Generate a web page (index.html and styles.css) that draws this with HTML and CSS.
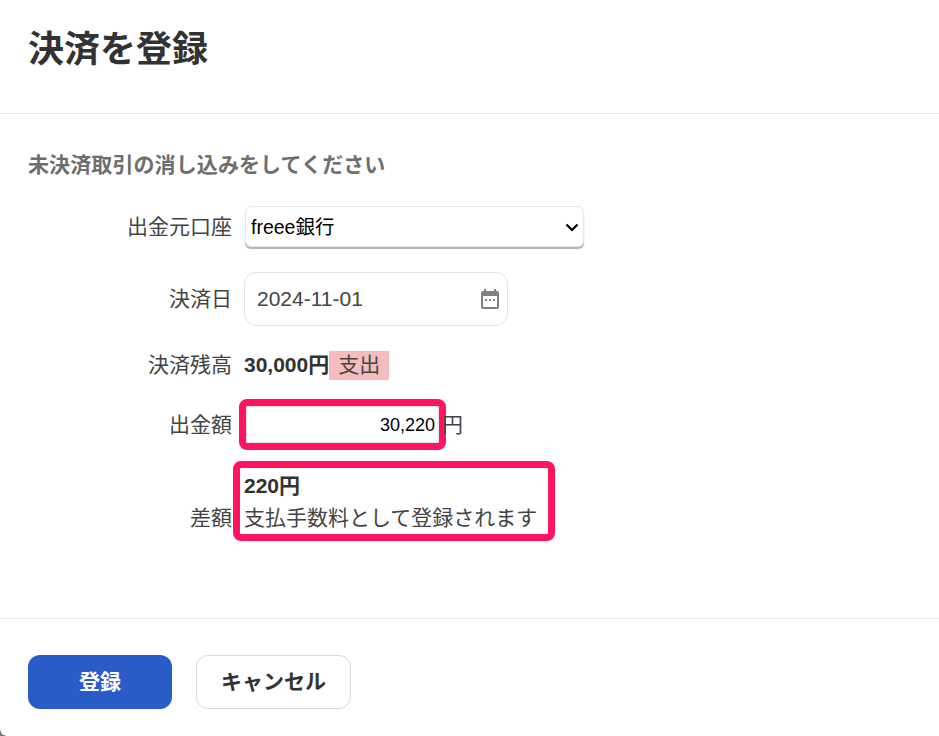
FILE: index.html
```html
<!DOCTYPE html>
<html lang="ja">
<head>
    <meta charset="UTF-8">
    <title>決済を登録</title>
    <link rel="stylesheet" href="styles.css">
</head>
<body>
    <div class="dialog">
        <header class="dialog-header">
            <h1 class="dialog-title">決済を登録</h1>
        </header>
        <div class="dialog-body">
            <h2 class="lead">未決済取引の消し込みをしてください</h2>
            <div class="row row-select">
                <label class="row-label">出金元口座</label>
                <div class="select-wrap">
                    <select class="account-select">
                        <option>freee銀行</option>
                    </select>
                    <svg class="select-arrow" width="14" height="9" viewBox="0 0 14 9">
                        <path fill="none" stroke="#000" stroke-width="2.2" d="M1.5 1.5L7 7l5.5-5.5"/>
                    </svg>
                </div>
            </div>
            <div class="row row-date">
                <label class="row-label">決済日</label>
                <div class="date-input">
                    <span>2024-11-01</span>
                    <svg class="date-icon" width="18" height="20" viewBox="0 0 18 20">
                        <path fill="#808080" d="M3 0h2v2h8V0h2v2h1a2 2 0 0 1 2 2v14a2 2 0 0 1-2 2H2a2 2 0 0 1-2-2V4a2 2 0 0 1 2-2h1z"/>
                        <rect x="2" y="7" width="14" height="11" fill="#fff"/>
                        <rect x="4" y="10" width="2" height="2" fill="#808080"/>
                        <rect x="8" y="10" width="2" height="2" fill="#808080"/>
                        <rect x="12" y="10" width="2" height="2" fill="#808080"/>
                    </svg>
                </div>
            </div>
            <div class="row row-balance">
                <label class="row-label">決済残高</label>
                <strong class="amount">30,000円</strong>
                <span class="tag">支出</span>
            </div>
            <div class="row row-payment">
                <label class="row-label">出金額</label>
                <div class="highlight amount-input">30,220</div>
                <span class="unit">円</span>
            </div>
            <div class="row row-diff">
                <label class="row-label">差額</label>
                <div class="highlight diff-box">
                    <strong class="amount">220円</strong>
                    <div>支払手数料として登録されます</div>
                </div>
            </div>
        </div>
        <footer class="dialog-footer">
            <button class="btn btn-primary">登録</button>
            <button class="btn btn-cancel">キャンセル</button>
        </footer>
    </div>
    <div class="corner"></div>
</body>
</html>
```

FILE: styles.css
```css
html, body {
    margin: 0;
    padding: 0;
    height: 736px;
    overflow: hidden;
    background-color: #fff;
    color: #323232;
    font-family: "Liberation Sans", "Noto Sans CJK JP", sans-serif;
}
.dialog-header {
    height: 113px;
    padding: 0 28px;
    border-bottom: 1px solid #e6e6e6;
}
.dialog-title {
    margin: 0;
    padding-top: 24px;
    font-size: 36px;
    line-height: 52px;
    font-weight: 700;
}
.dialog-body {
    height: 505px;
    padding: 0 28px;
    box-sizing: border-box;
    border-bottom: 1px solid #e6e6e6;
}
.lead {
    margin: 0;
    padding-top: 36px;
    font-size: 21px;
    line-height: 30px;
    font-weight: 700;
    letter-spacing: 0.1px;
    color: #6e6e6e;
}
.row {
    display: flex;
    align-items: center;
    font-size: 21px;
    color: #444;
}
.row-label {
    width: 204px;
    margin-right: 12px;
    line-height: 26px;
    text-align: right;
    flex-shrink: 0;
}
.row-select {
    margin-top: 26px;
}
.select-wrap {
    position: relative;
    margin-left: 1px;
}
.account-select {
    display: block;
    width: 339px;
    height: 41px;
    padding: 0 5px;
    appearance: none;
    background-color: #fff;
    border: 1px solid #e8e8e8;
    border-radius: 6px;
    box-shadow: 0 2px 1px rgba(0, 0, 0, 0.3);
    font-family: inherit;
    font-size: 19.5px;
    color: #000;
}
.select-arrow {
    position: absolute;
    top: 17px;
    right: 5px;
}
.row-date {
    margin-top: 25px;
}
.date-input {
    display: flex;
    align-items: center;
    justify-content: space-between;
    width: 264px;
    height: 54px;
    padding: 0 8px 0 12px;
    box-sizing: border-box;
    border: 1px solid #e6e2d8;
    border-radius: 12px;
    font-size: 21px;
    line-height: 26px;
}
.row-balance {
    margin-top: 25px;
    height: 29px;
    align-items: flex-start;
}
.row-balance .row-label {
    line-height: 27px;
}
.amount {
    font-size: 21px;
    line-height: 27px;
    font-weight: 700;
    color: #323232;
}
.tag {
    padding: 0 9px 2px;
    line-height: 27px;
    background-color: #f4bcbc;
}
.row-payment {
    margin-top: 19px;
}
.highlight {
    border: 7px solid #ff1460;
    border-radius: 8px;
    box-sizing: border-box;
}
.amount-input {
    width: 207px;
    height: 51px;
    margin-left: -5px;
    padding-right: 4px;
    text-align: right;
    line-height: 38px;
    font-size: 18px;
    color: #000;
    box-shadow: inset 0 0 3px rgba(0, 0, 0, 0.25);
}
.unit {
    margin-left: -4px;
    line-height: 26px;
}
.row-diff {
    margin-top: 11px;
    align-items: flex-end;
}
.row-diff .row-label {
    margin-bottom: 10px;
}
.diff-box {
    width: 322px;
    height: 80px;
    margin-left: -11px;
    padding: 2px 4px;
    line-height: 32px;
    font-size: 21px;
}
.dialog-footer {
    display: flex;
    gap: 24px;
    padding: 36px 28px 0;
}
.btn {
    height: 54px;
    padding: 0 0 4px;
    border-radius: 12px;
    font-family: inherit;
    font-size: 21px;
    font-weight: 700;
}
.btn-primary {
    width: 144px;
    background-color: #2a5cc8;
    color: #fff;
    border: none;
}
.btn-cancel {
    width: 155px;
    background-color: #fff;
    color: #323232;
    border: 1px solid #d9d9d9;
}
.corner {
    position: absolute;
    left: 0;
    top: 730px;
    width: 6px;
    height: 6px;
    background: radial-gradient(circle at 100% 0, transparent 5px, #777 6px);
}
```
